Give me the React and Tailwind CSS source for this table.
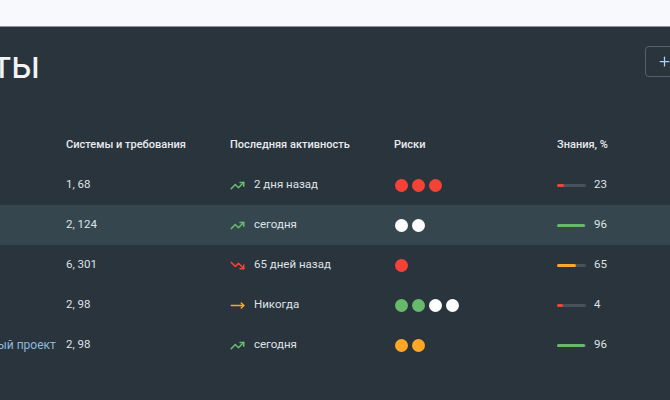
import React from 'react'
import { TrendingUp, TrendingDown, MoveRight, Plus } from 'lucide-react'

const RISK = {
  r: 'bg-[#f44336]',
  w: 'bg-white',
  g: 'bg-[#66bb6a]',
  o: 'bg-[#ffa726]',
}

const rows = [
  { name: 'Бета', sys: '1, 68', trend: 'up', when: '2 дня назад', risks: ['r', 'r', 'r'], know: 23, bar: 'bg-[#f44336]' },
  { name: 'Альфа', sys: '2, 124', trend: 'up', when: 'сегодня', risks: ['w', 'w'], know: 96, bar: 'bg-[#66bb6a]', active: true },
  { name: 'CRM', sys: '6, 301', trend: 'down', when: '65 дней назад', risks: ['r'], know: 65, bar: 'bg-[#ffa726]' },
  { name: 'ERP', sys: '2, 98', trend: 'flat', when: 'Никогда', risks: ['g', 'g', 'w', 'w'], know: 4, bar: 'bg-[#f44336]' },
  { name: 'Тестовый проект', sys: '2, 98', trend: 'up', when: 'сегодня', risks: ['o', 'o'], know: 96, bar: 'bg-[#66bb6a]' },
]

const TrendIcon = ({ trend }) => {
  if (trend === 'down') return <TrendingDown className="h-[15px] w-[15px] text-[#f44336]" strokeWidth={2.4} />
  if (trend === 'flat') return <MoveRight className="h-[15px] w-[15px] text-[#ffa726]" strokeWidth={2.4} />
  return <TrendingUp className="h-[15px] w-[15px] text-[#66bb6a]" strokeWidth={2.4} />
}

const Row = ({ row }) => (
  <div className={`flex h-[40px] items-center text-[11.5px] text-[#dfe3e6] ${row.active ? 'bg-[#36464f]' : ''}`}>
    <div className="w-[66px] shrink-0 overflow-hidden">
      <div className="ml-[-41px] whitespace-nowrap text-[12px] text-[#8fb8dc]">{row.name}</div>
    </div>
    <div className="w-[164px] shrink-0">{row.sys}</div>
    <div className="flex w-[164px] shrink-0 items-center gap-[9px]">
      <TrendIcon trend={row.trend} />
      <span>{row.when}</span>
    </div>
    <div className="flex w-[163px] shrink-0 items-center gap-[4px] pl-[1px]">
      {row.risks.map((r, i) => (
        <span key={i} className={`h-[13px] w-[13px] rounded-full ${RISK[r]}`} />
      ))}
    </div>
    <div className="flex items-center gap-[8px]">
      <div className="h-[3px] w-[29px] rounded-full bg-[#46525c]">
        <div className={`h-[3px] rounded-full ${row.bar}`} style={{ width: `${Math.max(row.know, 20)}%` }} />
      </div>
      <span>{row.know}</span>
    </div>
  </div>
)

export default function App() {
  return (
    <div className="h-[400px] w-[670px] overflow-hidden bg-[#29343d] font-['Roboto',sans-serif]">
      <div className="h-[27px] border-b border-[#8d949b] bg-[#f8f9fc]" />
      <div className="flex h-[98px] items-start justify-between pt-[19px]">
        <h1 className="ml-[-118px] mt-[-3px] whitespace-nowrap text-[38px] font-normal leading-[44px] text-[#f1f3f5]">
          Проекты
        </h1>
        <button className="mr-[-30px] flex h-[31px] w-[55px] items-center rounded-[4px] border border-[#56616b] pl-[11px] text-[#a9d2f5]">
          <Plus className="h-[15px] w-[15px]" strokeWidth={2} />
        </button>
      </div>
      <div className="flex h-[40px] items-center text-[11px] font-medium text-[#e8ebee]">
        <div className="w-[66px] shrink-0" />
        <div className="w-[164px] shrink-0">Системы и требования</div>
        <div className="w-[164px] shrink-0">Последняя активность</div>
        <div className="w-[163px] shrink-0">Риски</div>
        <div>Знания, %</div>
      </div>
      {rows.map((row, i) => (
        <Row key={i} row={row} />
      ))}
    </div>
  )
}
